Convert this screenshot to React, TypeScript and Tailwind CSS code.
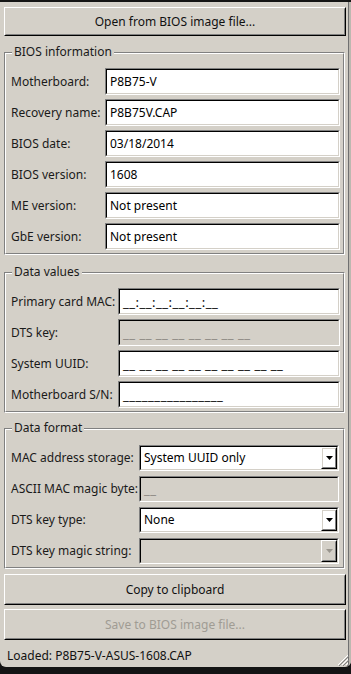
import React from "react";

const BG = "bg-[#d4d0c8]";

function Sunken({
  disabled,
  className = "",
  children,
}: {
  disabled?: boolean;
  className?: string;
  children?: React.ReactNode;
}) {
  return (
    <div
      className={`border border-t-[#808080] border-l-[#808080] border-b-white border-r-white ${className}`}
    >
      <div
        className={`h-full border border-t-black border-l-black border-b-[#d4d0c8] border-r-[#d4d0c8] ${
          disabled ? "bg-[#d4d0c8]" : "bg-white"
        } flex items-center`}
      >
        {children}
      </div>
    </div>
  );
}

function Raised({
  className = "",
  children,
}: {
  className?: string;
  children?: React.ReactNode;
}) {
  return (
    <div
      className={`border border-t-white border-l-white border-b-black border-r-black ${className}`}
    >
      <div className="h-full border border-t-[#d4d0c8] border-l-[#d4d0c8] border-b-[#808080] border-r-[#808080] flex items-center justify-center">
        {children}
      </div>
    </div>
  );
}

function Field({
  value,
  disabled,
  mask,
}: {
  value: string;
  disabled?: boolean;
  mask?: boolean;
}) {
  return (
    <Sunken disabled={disabled} className="h-[27px]">
      <span
        className={`pl-[3px] whitespace-pre leading-[18px] ${
          mask ? "text-[13px] tracking-[0.5px]" : ""
        } ${disabled ? "text-[#8a8680]" : "text-black"}`}
      >
        {value}
      </span>
    </Sunken>
  );
}

function Combo({ value, disabled }: { value?: string; disabled?: boolean }) {
  return (
    <Sunken disabled={disabled} className="h-[26px]">
      <span className="flex-1 pl-[3px] text-black leading-[18px]">
        {value}
      </span>
      <Raised className="w-[16px] self-stretch">
        <svg width="7" height="4" viewBox="0 0 7 4">
          <polygon
            points="0,0 7,0 3.5,4"
            fill={disabled ? "#9a968e" : "#000000"}
          />
        </svg>
      </Raised>
    </Sunken>
  );
}

function Group({
  title,
  className = "",
  padTop,
  children,
}: {
  title: string;
  className?: string;
  padTop: string;
  children: React.ReactNode;
}) {
  return (
    <div
      className={`relative mr-[1px] border border-t-[#808080] border-l-[#808080] border-b-white border-r-white ${className}`}
    >
      <div
        className={`border border-t-white border-l-white border-b-[#808080] border-r-[#808080] pl-[5px] pr-[3px] pb-[3px] ${padTop}`}
      >
        {children}
      </div>
      <span
        className={`absolute left-[7px] top-[-10px] ${BG} px-[2px] leading-[18px] text-[#1a1a1a]`}
      >
        {title}
      </span>
    </div>
  );
}

function Label({ children }: { children: React.ReactNode }) {
  return (
    <div className="flex items-center text-[#1a1a1a] whitespace-nowrap leading-[18px]">
      {children}
    </div>
  );
}

export default function App() {
  return (
    <div className="w-[351px] h-[674px] bg-[#141414] flex flex-col font-['Noto_Sans',sans-serif] text-[12px]">
      <div className="h-[2px] shrink-0" />
      <div className={`relative flex h-[665px] ${BG} rounded-b-[6px] overflow-hidden`}>
        <div className="w-[348px] flex flex-col pt-[5px] pl-[4px] pr-[2px]">
          <Raised className="h-[29px]">
            <span className="text-[#111] leading-[18px]">
              Open from BIOS image file...
            </span>
          </Raised>

          <Group title="BIOS information" className="mt-[16px]" padTop="pt-[14px]">
            <div className="grid grid-cols-[94px_1fr] gap-y-[4px] auto-rows-[27px]">
              <Label>Motherboard:</Label>
              <Field value="P8B75-V" />
              <Label>Recovery name:</Label>
              <Field value="P8B75V.CAP" />
              <Label>BIOS date:</Label>
              <Field value="03/18/2014" />
              <Label>BIOS version:</Label>
              <Field value="1608" />
              <Label>ME version:</Label>
              <Field value="Not present" />
              <Label>GbE version:</Label>
              <Field value="Not present" />
            </div>
          </Group>

          <Group title="Data values" className="mt-[17px]" padTop="pt-[14px]">
            <div className="grid grid-cols-[107px_1fr] gap-y-[4px] auto-rows-[27px]">
              <Label>Primary card MAC:</Label>
              <Field mask value="__:__:__:__:__:__" />
              <Label>DTS key:</Label>
              <Field mask value="__ __ __ __ __ __ __ __" disabled />
              <Label>System UUID:</Label>
              <Field mask value="__ __ __ __ __ __ __ __ __ __" />
              <Label>Motherboard S/N:</Label>
              <Field mask value="________________" />
            </div>
          </Group>

          <Group title="Data format" className="mt-[15px]" padTop="pt-[15px]">
            <div className="grid grid-cols-[128px_1fr] gap-y-[5px] auto-rows-[26px] pr-[1px]">
              <Label>MAC address storage:</Label>
              <Combo value="System UUID only" />
              <Label>ASCII MAC magic byte:</Label>
              <Sunken disabled className="h-[26px]">
                <span className="pl-[3px] text-[#8a8680] leading-[18px] text-[13px] tracking-[0.5px]">
                  __
                </span>
              </Sunken>
              <Label>DTS key type:</Label>
              <Combo value="None" />
              <Label>DTS key magic string:</Label>
              <Combo disabled />
            </div>
          </Group>

          <Raised className="h-[31px] mt-[5px]">
            <span className="text-[#111] leading-[18px]">Copy to clipboard</span>
          </Raised>
          <Raised className="h-[31px] mt-[4px]">
            <span className="text-[#a09c94] leading-[18px]">
              Save to BIOS image file...
            </span>
          </Raised>
          <div className="mt-[7px] ml-[3px] leading-[18px] text-[#111]">
            Loaded: P8B75-V-ASUS-1608.CAP
          </div>
        </div>
        <div className="w-[1px] bg-[#707070]" />
        <div className="w-[2px] bg-[#bcb8b0]" />
        <svg
          className="absolute right-[2px] bottom-[1px]"
          width="12"
          height="12"
          viewBox="0 0 12 12"
        >
          <line x1="11" y1="1" x2="1" y2="11" stroke="#ffffff" />
          <line x1="12" y1="2" x2="2" y2="12" stroke="#808080" />
          <line x1="11" y1="5" x2="5" y2="11" stroke="#ffffff" />
          <line x1="12" y1="6" x2="6" y2="12" stroke="#808080" />
          <line x1="11" y1="9" x2="9" y2="11" stroke="#ffffff" />
          <line x1="12" y1="10" x2="10" y2="12" stroke="#808080" />
        </svg>
      </div>
    </div>
  );
}
